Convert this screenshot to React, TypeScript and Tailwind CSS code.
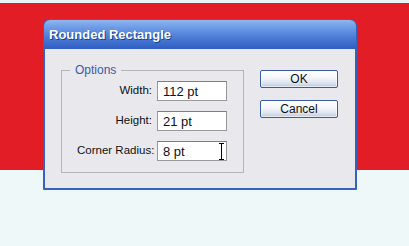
import React from "react";

function Row({ label, value, cursor }: { label: string; value: string; cursor?: boolean }) {
  return (
    <div className="flex items-center h-[20px]">
      <div className="w-[80px] shrink-0 whitespace-nowrap text-right pr-[5px] text-[11.5px] leading-none text-[#111]">{label}</div>
      <div className="relative w-[70px] h-[20px] bg-white border border-[#9a9a9a] border-t-[#7f7f7f] flex items-center pl-[5px] text-[13px] leading-none text-[#111]">
        {value}
        {cursor && (
          <div className="absolute right-[2px] top-[1px] w-[5px] h-[17px] flex flex-col items-center">
            <div className="w-[5px] h-[1px] bg-black" />
            <div className="w-[1px] flex-1 bg-black" />
            <div className="w-[5px] h-[1px] bg-black" />
          </div>
        )}
      </div>
    </div>
  );
}

function Btn({ children }: { children: React.ReactNode }) {
  return (
    <div className="w-[78px] h-[18px] rounded-[2px] border border-[#3b5d9f] bg-[linear-gradient(to_bottom,#ffffff_0%,#f2f5fa_45%,#dde5f0_75%,#b9c8de_100%)] flex items-center justify-center text-[12px] leading-none text-[#111] shadow-[inset_0_0_0_1px_rgba(255,255,255,0.6)]">
      {children}
    </div>
  );
}

export default function App() {
  return (
    <div
      className="relative w-[409px] h-[246px] overflow-hidden bg-[#eef8f9] flex flex-col"
      style={{ fontFamily: '"Liberation Sans", Arial, sans-serif' }}
    >
      <div className="h-[3px] bg-[#e9f4f6]" />
      <div className="h-[167px] bg-[#e31d25]" />
      <div className="flex-1 bg-[#eef8f9]" />

      <div className="absolute left-[43px] top-[19px] w-[314px] h-[171px] flex flex-col rounded-t-[7px] overflow-hidden border border-[#3561c0] bg-[#3561c0]">
        <div className="h-[29px] shrink-0 bg-[linear-gradient(to_bottom,#8fb6ef_0%,#6e9ce6_25%,#4b7dd6_60%,#2f5dc2_100%)] flex items-center pl-[5px]">
          <span className="text-[13px] font-bold text-white leading-none [text-shadow:1px_1px_0_#1d3f8f]">
            Rounded Rectangle
          </span>
        </div>
        <div className="flex-1 mx-[1px] mb-[1px] bg-[#e9e8ec] flex pl-[16px] pr-[17px] pt-[15px]">
          <fieldset className="w-[183px] h-[109px] shrink-0 border border-[#b5b5b8] pl-[15px] pr-[16px] pt-[2px] m-0 min-w-0">
            <legend className="-ml-[7px] px-[5px] text-[12px] leading-none text-[#3a5aa8]">Options</legend>
            <div className="flex flex-col gap-[10px] mt-[3px]">
              <Row label="Width:" value="112 pt" />
              <Row label="Height:" value="21 pt" />
              <Row label="Corner Radius:" value="8 pt" cursor />
            </div>
          </fieldset>
          <div className="ml-auto flex flex-col gap-[12px] pt-[6px]">
            <Btn>OK</Btn>
            <Btn>Cancel</Btn>
          </div>
        </div>
      </div>
    </div>
  );
}
